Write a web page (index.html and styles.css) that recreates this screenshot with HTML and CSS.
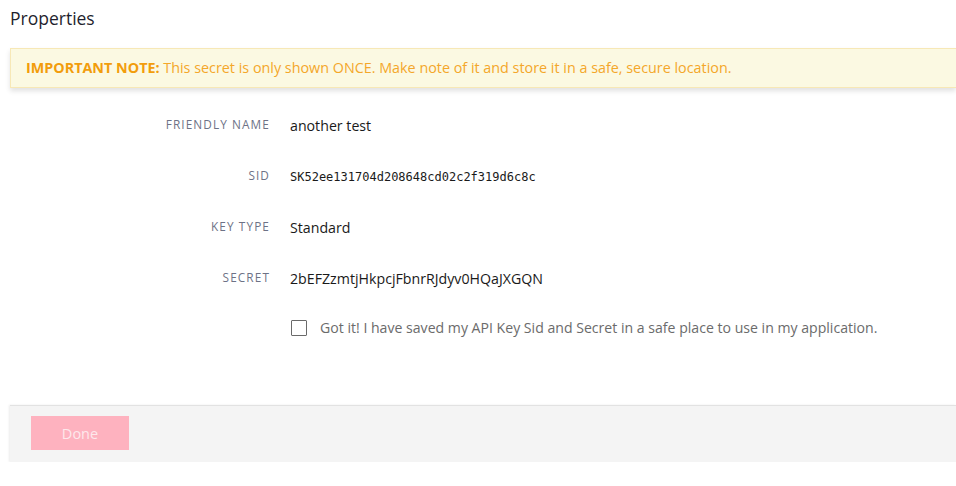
FILE: index.html
```html
<!DOCTYPE html>
<html>
<head>
<meta charset="utf-8">
<link rel="stylesheet" href="styles.css">
</head>
<body>
<h1 class="title">Properties</h1>
<div class="note"><strong>IMPORTANT NOTE:</strong> This secret is only shown ONCE. Make note of it and store it in a safe, secure location.</div>
<div class="props">
  <div class="row"><div class="label">Friendly Name</div><div class="value">another test</div></div>
  <div class="row"><div class="label">SID</div><div class="value mono">SK52ee131704d208648cd02c2f319d6c8c</div></div>
  <div class="row"><div class="label">Key Type</div><div class="value">Standard</div></div>
  <div class="row"><div class="label">Secret</div><div class="value">2bEFZzmtjHkpcjFbnrRJdyv0HQaJXGQN</div></div>
  <div class="row check-row"><div class="label"></div><label class="check"><span class="box"></span><span class="check-text">Got it! I have saved my API Key Sid and Secret in a safe place to use in my application.</span></label></div>
</div>
<div class="footer"><button class="done">Done</button></div>
</body>
</html>
```

FILE: styles.css
```css
html, body { margin: 0; padding: 0; background: #fff; }
body { font-family: "Open Sans", "Noto Sans", sans-serif; color: #222; width: 956px; overflow: hidden; }
.title { margin: 0; padding: 6px 0 0 10px; height: 42px; box-sizing: border-box; font-size: 17.5px; font-weight: 400; color: #1f1f2e; line-height: 24px; }
.note { margin-left: 10px; margin-top: 6px; height: 40px; box-sizing: border-box; background: #fbf9e2; border: 1px solid #f7e8b6; border-right: none; box-shadow: 0 3px 5px rgba(0,0,0,0.12); padding-left: 15px; font-size: 14.35px; line-height: 38px; color: #f4a72a; white-space: nowrap; }
.note strong { font-weight: 700; color: #f29d0c; }
.props { padding-top: 21px; }
.row { display: grid; grid-template-columns: 270px 1fr; column-gap: 20px; height: 51px; align-items: start; }
.label { text-align: right; text-transform: uppercase; font-size: 11.8px; letter-spacing: 1.1px; color: #6d7286; line-height: 16px; padding-top: 7px; }
.value { font-size: 14.2px; color: #1a1a1a; line-height: 20px; padding-top: 7px; }
.mono { font-family: "DejaVu Sans Mono", monospace; font-size: 12px; }
.check-row { margin-top: -4px; }
.check { display: flex; align-items: center; gap: 13px; padding-left: 1px; padding-top: 9px; }
.box { width: 14px; height: 14px; border: 1px solid #6a6a6a; border-radius: 1px; background: #fff; flex: none; }
.check-text { font-size: 14.1px; color: #6b6b6b; line-height: 20px; white-space: nowrap; }
.footer { margin-left: 10px; margin-top: 45px; height: 57px; box-sizing: border-box; background: #f4f4f4; border-top: 1px solid #e2e2e2; box-shadow: -1px 0 2px rgba(0,0,0,0.08); padding: 10px 0 0 21px; }
.done { width: 98px; height: 34px; border: none; background: #feb2bf; color: #fde8ec; font-family: "Open Sans", "Noto Sans", sans-serif; font-size: 14.5px; padding: 0; }
```
